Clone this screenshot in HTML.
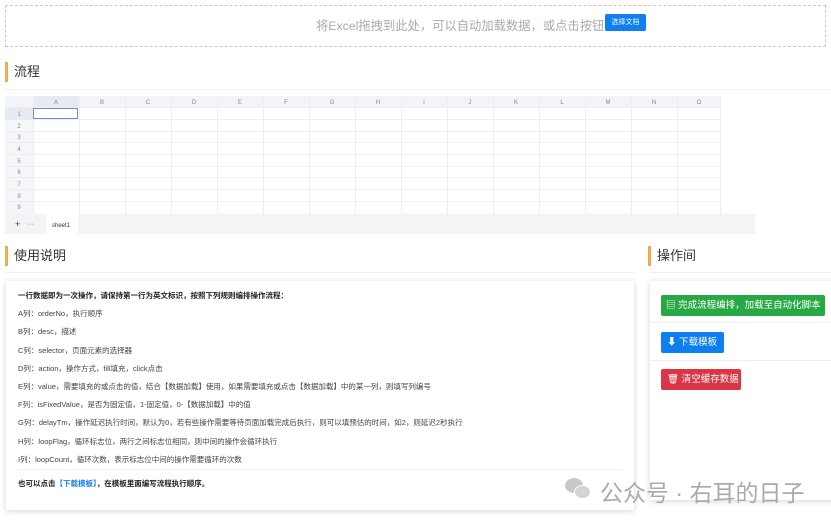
<!DOCTYPE html>
<html><head><meta charset="utf-8"><style>
*{margin:0;padding:0;box-sizing:border-box}
body{width:831px;height:521px;background:#fff;font-family:"Liberation Sans","Noto Sans CJK SC",sans-serif;position:relative;overflow:hidden;color:#333}
.abs{position:absolute}
.drop{left:5px;top:5px;width:821px;height:42px;border:1px dashed #c8c8c8}
.h{font-size:13px;color:#333;padding-left:6px;border-left:3px solid #f0ad4e;height:20px;line-height:20px}
.line{height:1px;background:#eee}
.card{background:#fff;box-shadow:0 1px 6px rgba(0,0,0,.18)}
.desc p{font-size:7.5px;color:#444;height:18.2px;line-height:10px;white-space:nowrap}
.btn{color:#fff;font-size:9.5px;border-radius:2px;height:21px;line-height:21px;padding:0 6px;white-space:nowrap}
</style></head><body>
<div class="abs drop"></div>
<div class="abs" style="left:316px;top:16px;font-size:12.3px;color:#aaa;white-space:nowrap">将Excel拖拽到此处，可以自动加载数据，或点击按钮</div>
<div class="abs" style="left:605px;top:14px;width:41px;height:17px;background:#0d7ff0;color:#fff;font-size:7px;line-height:17px;text-align:center;border-radius:2px">选择文档</div>

<div class="abs h" style="left:5px;top:62px">流程</div>
<div class="abs line" style="left:5px;top:89px;width:826px"></div>

<svg class="abs" style="left:5px;top:96px" width="750" height="138">
<rect x="0" y="0" width="715" height="11" fill="#f3f4f7"/>
<rect x="28" y="0" width="46" height="11" fill="#e6ebf3"/>
<rect x="0" y="11" width="28" height="107" fill="#f5f6f9"/>
<rect x="0" y="12" width="28" height="11" fill="#e6ebf3"/>
<g stroke="#eceef1" stroke-width="1">
<line x1="0" y1="23.5" x2="715" y2="23.5"/><line x1="0" y1="35.5" x2="715" y2="35.5"/><line x1="0" y1="46.5" x2="715" y2="46.5"/><line x1="0" y1="58.5" x2="715" y2="58.5"/><line x1="0" y1="70.5" x2="715" y2="70.5"/><line x1="0" y1="81.5" x2="715" y2="81.5"/><line x1="0" y1="93.5" x2="715" y2="93.5"/><line x1="0" y1="105.5" x2="715" y2="105.5"/><line x1="0" y1="11.5" x2="715" y2="11.5"/>
<line x1="28.5" y1="0" x2="28.5" y2="118"/><line x1="74.5" y1="0" x2="74.5" y2="118"/><line x1="120.5" y1="0" x2="120.5" y2="118"/><line x1="166.5" y1="0" x2="166.5" y2="118"/><line x1="212.5" y1="0" x2="212.5" y2="118"/><line x1="258.5" y1="0" x2="258.5" y2="118"/><line x1="304.5" y1="0" x2="304.5" y2="118"/><line x1="350.5" y1="0" x2="350.5" y2="118"/><line x1="396.5" y1="0" x2="396.5" y2="118"/><line x1="442.5" y1="0" x2="442.5" y2="118"/><line x1="488.5" y1="0" x2="488.5" y2="118"/><line x1="534.5" y1="0" x2="534.5" y2="118"/><line x1="580.5" y1="0" x2="580.5" y2="118"/><line x1="626.5" y1="0" x2="626.5" y2="118"/><line x1="672.5" y1="0" x2="672.5" y2="118"/><line x1="715.5" y1="0" x2="715.5" y2="118"/>
</g>
<rect x="28.5" y="12.5" width="44" height="10" fill="none" stroke="#6a8fd8"/>
<g font-size="6" fill="#888" text-anchor="middle" font-family="Liberation Sans">
<text x="51" y="8">A</text><text x="97" y="8">B</text><text x="143" y="8">C</text><text x="189" y="8">D</text><text x="235" y="8">E</text><text x="281" y="8">F</text><text x="327" y="8">G</text><text x="373" y="8">H</text><text x="419" y="8">I</text><text x="465" y="8">J</text><text x="511" y="8">K</text><text x="557" y="8">L</text><text x="603" y="8">M</text><text x="649" y="8">N</text><text x="694" y="8">O</text>
<text x="14" y="20">1</text><text x="14" y="32">2</text><text x="14" y="43">3</text><text x="14" y="55">4</text><text x="14" y="67">5</text><text x="14" y="78">6</text><text x="14" y="90">7</text><text x="14" y="102">8</text><text x="14" y="113">9</text>
</g>
<rect x="0" y="118" width="750" height="20" fill="#f3f4f6"/>
<rect x="41" y="118" width="32" height="20" fill="#fff"/>
<text x="10" y="131" font-size="9" fill="#444">+</text><text x="22" y="130" font-size="7" fill="#666">···</text>
<text x="47" y="131" font-size="6" fill="#333" font-family="Liberation Sans">sheet1</text>
</svg>

<div class="abs h" style="left:5px;top:246px">使用说明</div>
<div class="abs line" style="left:5px;top:272px;width:628px"></div>
<div class="abs h" style="left:648px;top:246px">操作间</div>
<div class="abs line" style="left:650px;top:272px;width:181px"></div>

<div class="abs card desc" style="left:6px;top:281px;width:628px;height:229px;padding:10px 12px">
<p style="font-weight:bold;color:#222">一行数据即为一次操作，请保持第一行为英文标识，按照下列规则编排操作流程：</p>
<p>A列：orderNo，执行顺序</p>
<p>B列：desc，描述</p>
<p>C列：selector，页面元素的选择器</p>
<p>D列：action，操作方式，fill填充，click点击</p>
<p>E列：value，需要填充的或点击的值，结合【数据加载】使用，如果需要填充或点击【数据加载】中的某一列，则填写列编号</p>
<p>F列：isFixedValue，是否为固定值，1-固定值，0-【数据加载】中的值</p>
<p>G列：delayTm，操作延迟执行时间，默认为0，若有些操作需要等待页面加载完成后执行，则可以填预估的时间，如2，则延迟2秒执行</p>
<p>H列：loopFlag，循环标志位，两行之间标志位相同，则中间的操作会循环执行</p>
<p style="height:14px">I列：loopCount，循环次数，表示标志位中间的操作需要循环的次数</p>
<div style="height:1px;background:#eee;margin-bottom:9px"></div>
<p style="font-weight:bold;color:#222">也可以点击<span style="color:#1a7ff0">【下载模板】</span>，在模板里面编写流程执行顺序。</p>
</div>

<div class="abs card" style="left:650px;top:281px;width:190px;height:219px"></div>
<div class="abs line" style="left:650px;top:322px;width:181px"></div>
<div class="abs line" style="left:650px;top:360px;width:181px"></div>
<div class="abs btn" style="left:661px;top:295px;width:164px;background:#28a745;padding:0 5px">▤ 完成流程编排，加载至自动化脚本</div>
<div class="abs btn" style="left:661px;top:332px;width:63px;background:#0d7ff0">⬇ 下载模板</div>
<div class="abs btn" style="left:661px;top:369px;width:80px;background:#dc3545">🗑 清空缓存数据</div>

<div class="abs" style="left:565px;top:478px;width:28px;height:24px">
<div class="abs" style="left:0;top:0;width:18px;height:15px;border-radius:50%;background:#c8c8c8"></div>
<div class="abs" style="left:9px;top:7px;width:17px;height:14px;border-radius:50%;background:#d4d4d4;border:1px solid #fff"></div>
</div>
<div class="abs" style="left:600px;top:474px;font-size:23px;color:#aaa;white-space:nowrap">公众号 · 右耳的日子</div>
</body></html>
